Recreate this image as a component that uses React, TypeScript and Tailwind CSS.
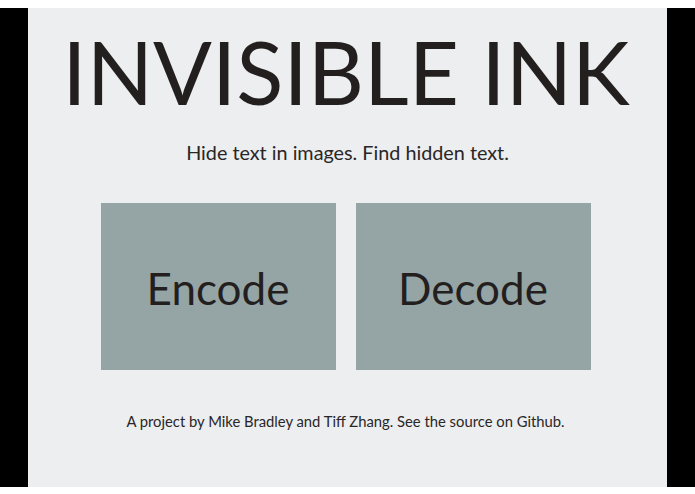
export default function App() {
  return (
    <div className="h-[494px] bg-white pt-2 pb-[7px]" style={{ fontFamily: 'Lato, "Noto Sans", sans-serif' }}>
      <div className="flex h-full bg-black px-7">
        <main className="flex flex-1 flex-col items-center bg-[#eceef0] text-[#241f1f]">
          <h1 className="mt-[9px] pr-[3px] text-[87px] leading-[110px]">INVISIBLE INK</h1>
          <p className="mt-[11px] text-[19.8px] leading-[28px] text-[#2a2626]">Hide text in images. Find hidden text.</p>
          <div className="mt-[37px] flex gap-5 pr-1">
            <a href="#" className="flex h-[167px] w-[235px] items-center justify-center bg-[#95a5a6] pt-[2px] text-[44px]">
              Encode
            </a>
            <a href="#" className="flex h-[167px] w-[235px] items-center justify-center bg-[#95a5a6] pt-[2px] text-[44px]">
              Decode
            </a>
          </div>
          <p className="mt-[40px] pr-[4px] text-[14.8px] leading-[22px] text-[#2a2626]">
            A project by Mike Bradley and Tiff Zhang. See the source on Github.
          </p>
        </main>
      </div>
    </div>
  )
}
